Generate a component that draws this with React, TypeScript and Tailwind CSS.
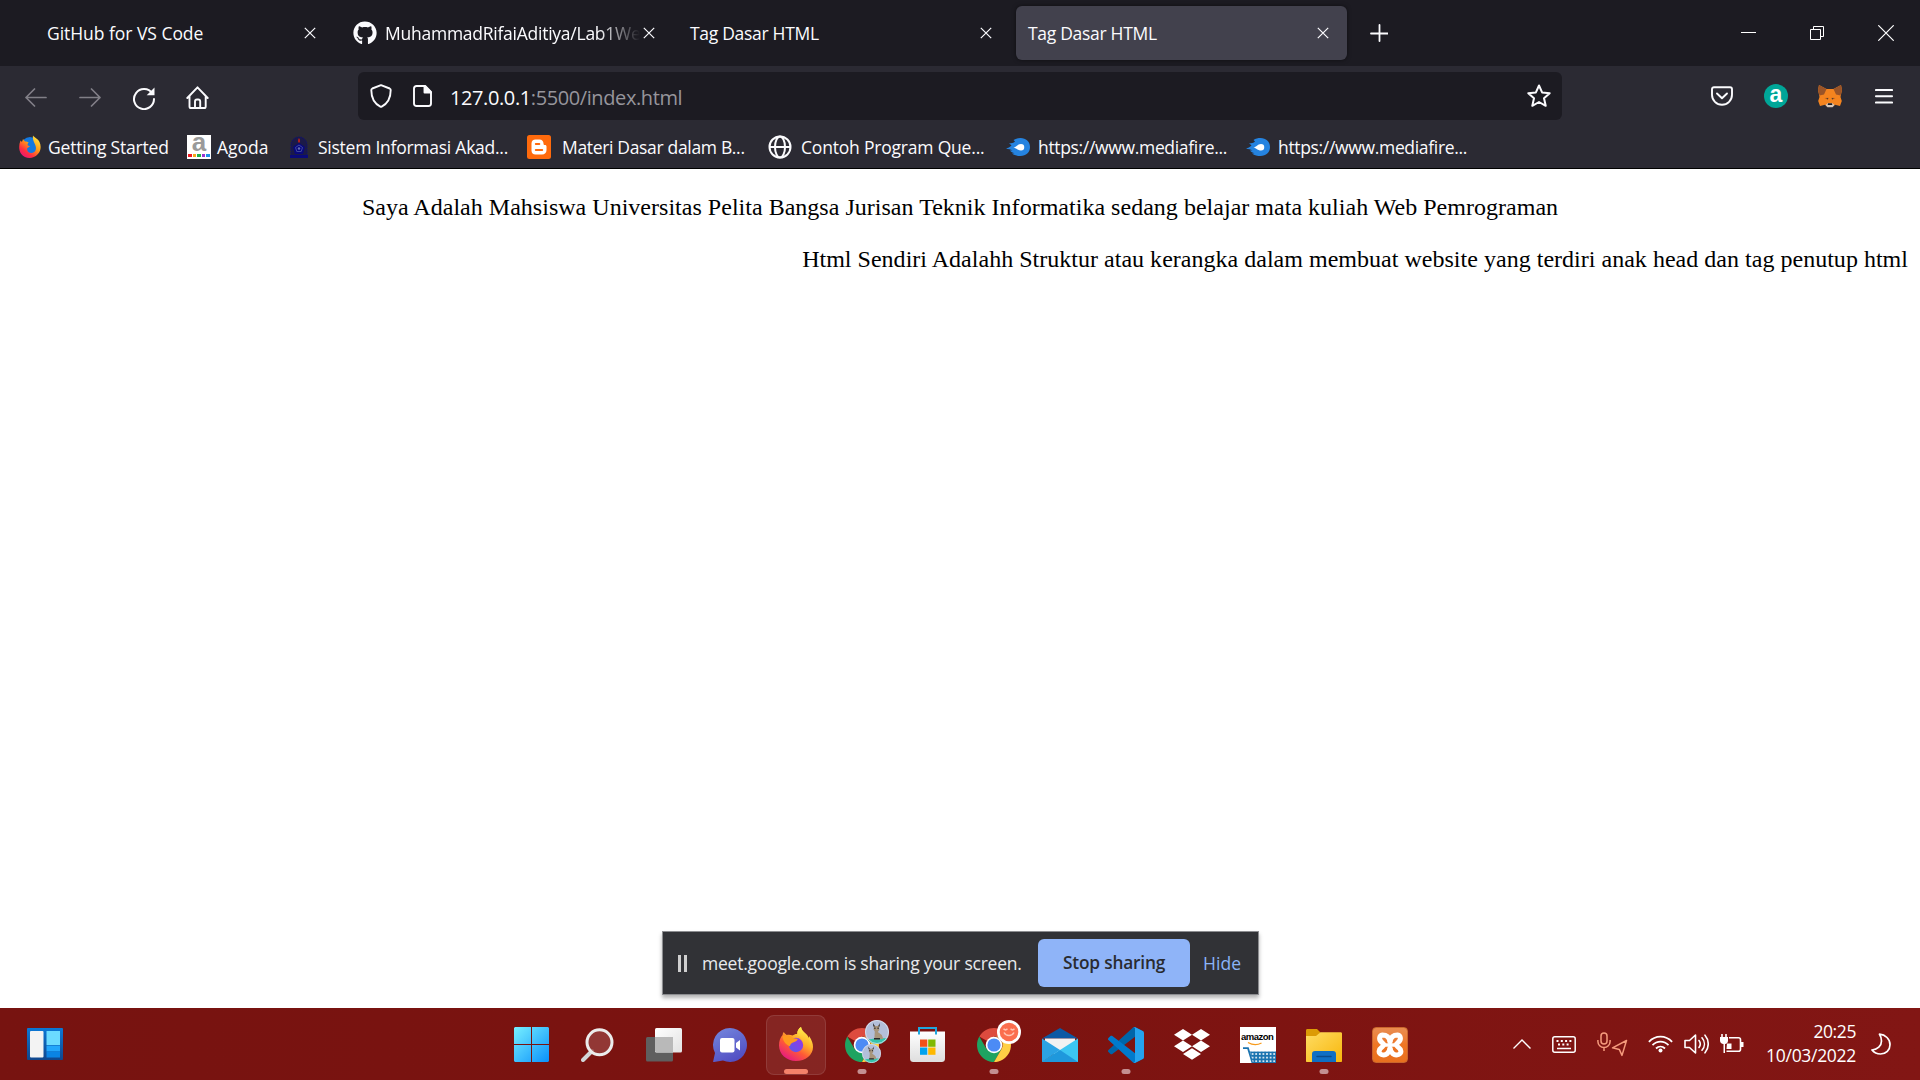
import React from 'react';
import { FaGithub } from 'react-icons/fa';
import { SiXampp } from 'react-icons/si';

const Close = () => (
  <svg className="h-3 w-3 shrink-0" viewBox="0 0 12 12" fill="none" stroke="#fbfbfe" strokeWidth="1.2">
    <path d="M.8.8l10.4 10.4M11.2.8L.8 11.2" />
  </svg>
);

const FirefoxIcon = ({ className }: { className: string }) => (
  <svg className={className} viewBox="0 0 34 34">
    <defs>
      <linearGradient id="ffBody" x1="0.85" y1="0.1" x2="0.25" y2="1">
        <stop offset="0" stopColor="#fff44f" />
        <stop offset=".35" stopColor="#ffb02a" />
        <stop offset=".62" stopColor="#ff5a36" />
        <stop offset="1" stopColor="#e31587" />
      </linearGradient>
      <linearGradient id="ffCore" x1="0" y1="1" x2="1" y2="0">
        <stop offset="0" stopColor="#5a5ae8" />
        <stop offset="1" stopColor="#9a35e8" />
      </linearGradient>
      <linearGradient id="ffTail" x1="0" y1="0" x2="0" y2="1">
        <stop offset="0" stopColor="#fff04a" />
        <stop offset="1" stopColor="#ff9a22" stopOpacity="0" />
      </linearGradient>
    </defs>
    <path d="M22 0c.5 3 2.200 4.500 5 7 1.500 1.400 2.300 2.700 2.700 4.200.3-.7.3-1.500.3-2.200 3 4 4 8 4 11 0 8-7.400 14-17 14S0 27 0 18.500C0 14 1.300 10.500 3.600 8c0-1 .4-2 1.100-2.900.6 1 1.600 2 3 2.900 2-.4 4.300-.2 5.800.5 1.500-1.200 3-1.700 4.700-1.600C18.200 4 19.500 1.500 22 0z" fill="url(#ffBody)" />
    <circle cx="17" cy="18" r="7.200" fill="url(#ffCore)" />
    <path d="M3.500 9c4-1.600 7.500-.8 10 1.400 1.400 1.200 3.800 1.200 5.300 1.300-.3 1.800-2 3-4.800 3.700-2.300.7-2.600 2-3 3.800C7.500 18 4 15 3.500 9z" fill="#ff9a1f" />
    <path d="M22 0c.5 3 2.200 4.500 5 7 3 3 4 7 2 13-1.500 3-4 4-5.500 3.500C26 17 24 12 20 9c-1.300-1-1.800-1.900-1.800-2.100C18.200 4 19.500 1.500 22 0z" fill="url(#ffTail)" />
  </svg>
);

const FirefoxBookmark = () => (
  <svg className="h-6 w-6" viewBox="0 0 24 24">
    <defs>
      <linearGradient id="fbBody" x1=".9" y1="0" x2=".2" y2="1">
        <stop offset="0" stopColor="#fff34a" />
        <stop offset=".45" stopColor="#ff9a16" />
        <stop offset=".75" stopColor="#ff3040" />
        <stop offset="1" stopColor="#e8117a" />
      </linearGradient>
    </defs>
    <circle cx="12" cy="11" r="9" fill="#1479e0" />
    <path d="M15 .5c1 2 5 3 6.500 6.500 2 4 1.400 9-1.800 12.300C15 24.500 7 24 3.300 19 .6 15.400.6 10 2.500 5.500L4 7l1-3 2 2.500c1.500 0 3 .5 3.800 1.300-1.500.7-1.300 2-1 2.800l2.200.7-2.800 1.900c-.7 3 2 5.300 4.800 4.800 3.500-.8 4.500-4 3.700-6.500C17.300 8.200 14.200 6 15 .5z" fill="url(#fbBody)" />
  </svg>
);

const Chrome = () => (
  <svg className="h-[34px] w-[34px]" viewBox="0 0 34 34">
    <path d="M17 17L2.300 8.500A17 17 0 0 1 31.700 8.500L17 8.500z" fill="#dd4b3e" />
    <path d="M2.300 8.500A17 17 0 0 0 17 34l7.400-12.700L17 17 9.700 21.300z" fill="#1ea361" />
    <path d="M31.700 8.500A17 17 0 0 1 17 34l7.400-12.700A8.500 8.500 0 0 0 17 8.500z" fill="#ffcf45" />
    <circle cx="17" cy="17" r="8.300" fill="#fff" />
    <circle cx="17" cy="17" r="6.600" fill="#4c8bf5" />
  </svg>
);

const Avatar = ({ className }: { className: string }) => (
  <svg className={className} viewBox="0 0 24 24">
    <clipPath id="avClip"><circle cx="12" cy="12" r="12" /></clipPath>
    <g clipPath="url(#avClip)">
      <rect width="24" height="24" fill="#b3bfda" />
      <path d="M0 20q8-2 24-2v6H0z" fill="#35c4ac" />
      <path d="M9 5l1.500 1h2L14 5l.3 5-1.500 2 4 3 1.500 4-9 .5.500-8-1.300-2z" fill="#a8957c" />
      <path d="M8 3l2 3.500H8.300zM14.500 3L13.300 6.500h1.500zM9.300 7.500h1.200V9H9.300zM12.500 7.500h1.200V9h-1.200zM9 18h6v1.500H9z" fill="#2c2a2c" />
    </g>
    <circle cx="12" cy="12" r="11.500" fill="none" stroke="#dfe5ef" strokeWidth=".8" />
  </svg>
);

const Pill = () => <span className="absolute bottom-[6px] left-1/2 h-[5px] w-[9px] -translate-x-1/2 rounded-full bg-[#c48f91]" />;

const Slot = ({ children }: { children: React.ReactNode }) => (
  <div className="relative flex h-full w-[66px] items-center justify-center pt-px">{children}</div>
);

const MediaFire = () => (
  <svg className="h-6 w-6" viewBox="0 0 24 24">
    <path d="M0 13.500c2-.5 4-1.500 5.500-3L3 8c3 .5 4.500 0 6-1.500L7.500 5C9.500 3.500 12 3 14.500 3 20 3 24 6.500 24 12s-4 9-9.500 9c-3 0-6-.5-8.500-2.500l2.500-.3C6.500 17.800 5 17 4 15.500l2.500-.2C4.500 14.500 2.500 14 0 13.500z" fill="#2583e0" />
    <path d="M7.500 12.500c3-.3 4-3.500 7.500-3.500a3.200 3.200 0 0 1 0 6.500c-3.500 0-4.500-2.500-7.500-3z" fill="#fff" />
  </svg>
);

function TabStrip() {
  return (
    <header className="flex h-[66px] items-center bg-[#1c1b22] text-[17.5px] text-[#fbfbfe]">
      <div className="flex h-[54px] w-[341px] items-center justify-between pr-[25px] pl-[47px]">
        <span className="tracking-[-0.04px]">GitHub for VS Code</span><Close />
      </div>
      <div className="flex h-[54px] w-[337px] items-center justify-between pr-[23px] pl-[12px]">
        <FaGithub className="h-6 w-6 shrink-0" />
        <span className="mr-auto ml-[8px] tracking-[-0.25px] whitespace-nowrap [mask-image:linear-gradient(to_right,#000_213px,transparent_255px)]">MuhammadRifaiAditiya/Lab1We</span>
        <Close />
      </div>
      <div className="flex h-[54px] w-[338px] items-center justify-between pr-[24px] pl-[12px]">
        <span className="tracking-[-0.3px]">Tag Dasar HTML</span><Close />
      </div>
      <div className="flex h-[54px] w-[331px] items-center justify-between rounded-md bg-[#42414d] pr-[18px] pl-[12px] shadow-[0_0_4px_rgba(0,0,0,0.5)]">
        <span className="tracking-[-0.3px]">Tag Dasar HTML</span><Close />
      </div>
      <svg className="ml-[23px] h-[18px] w-[18px]" viewBox="0 0 18 18" stroke="#fbfbfe" strokeWidth="1.800" strokeLinecap="round"><path d="M9.500.9v16.200M1 9.500h17" /></svg>
      <svg className="ml-auto h-4 w-[15px]" viewBox="0 0 15 16"><path d="M0 7h15v1H0z" fill="#fff" /></svg>
      <svg className="ml-[54px] h-[14px] w-[14px]" viewBox="0 0 14 14" fill="none" stroke="#fff"><path d="M.5 3.500h10v10H.5zM3.500 3.500v-3h10v10h-3" /></svg>
      <svg className="mr-[26px] ml-[54px] h-4 w-4" viewBox="0 0 16 16" stroke="#fff" strokeWidth="1.200"><path d="M.3.3l15.400 15.400M15.700.3L.3 15.700" /></svg>
    </header>
  );
}

function NavBar() {
  return (
    <div className="flex h-[60px] items-center bg-[#2b2a33]">
      <div className="flex w-[358px] items-center pt-[3px] pl-[25px]">
        <svg className="h-6 w-[22px]" viewBox="0 0 22 24" fill="none" stroke="#817f87" strokeWidth="1.700" strokeLinecap="round" strokeLinejoin="round"><path d="M21 11.500H1M9.500 3L1 11.500 9.500 20" /></svg>
        <svg className="ml-[32px] h-6 w-[22px]" viewBox="0 0 22 24" fill="none" stroke="#817f87" strokeWidth="1.700" strokeLinecap="round" strokeLinejoin="round"><path d="M1 11.500h20M12.500 3L21 11.500 12.500 20" /></svg>
        <svg className="ml-[31px] h-6 w-6" viewBox="0 0 24 24" fill="none" stroke="#fbfbfe" strokeWidth="2" strokeLinecap="round"><path d="M20.300 7.500A10 10 0 1 0 22 13" /><path d="M22.500 1.500v7.800h-7.800z" fill="#fbfbfe" stroke="none" /></svg>
        <svg className="ml-[30px] h-6 w-6" viewBox="0 0 24 24" fill="none" stroke="#fbfbfe" strokeWidth="1.900" strokeLinecap="round" strokeLinejoin="round"><path d="M1.300 12L11.500 1.300 21.700 12M3.500 10.200v10.200c0 1 .6 1.600 1.600 1.600h13c1 0 1.600-.6 1.600-1.600V10.200M9 22v-6.500c0-1.200.8-2 2-2h1.200c1.200 0 2 .8 2 2V22" /></svg>
      </div>
      <div className="flex h-12 w-[1204px] items-center rounded-md bg-[#1c1b22] pr-[11px] pl-[12px]">
        <svg className="h-6 w-[22px]" viewBox="0 0 22 24" fill="none" stroke="#fbfbfe" strokeWidth="1.900" strokeLinejoin="round"><path d="M11 1.200l8.700 3.300c.7.300 1 .8 1 1.500 0 8.200-3.200 13.600-9 16.600-.5.200-.9.200-1.400 0C4.500 19.600 1.300 14.200 1.300 6c0-.7.300-1.200 1-1.500z" /></svg>
        <svg className="ml-[21px] h-[22px] w-[19px]" viewBox="0 0 19 22" fill="none" stroke="#fbfbfe" strokeWidth="1.900" strokeLinejoin="round"><path d="M3.500 1h8.700L18 6.800v11.700c0 1.500-1 2.500-2.500 2.500h-12C2 21 1 20 1 18.500v-15C1 2 2 1 3.500 1z" /><path d="M11.500 1v6.500H18z" fill="#fbfbfe" /></svg>
        <span className="ml-[18px] pt-[3px] text-[20px] tracking-[-0.4px] text-[#96959c]"><span className="text-[#fbfbfe]">127.0.0.1</span>:5500/index.html</span>
        <svg className="ml-auto h-6 w-6" viewBox="0 0 24 24" fill="none" stroke="#fbfbfe" strokeWidth="2" strokeLinejoin="round"><path d="M12 1.500l3.100 6.900 7.600.8-5.700 5 1.700 7.600L12 18l-6.700 3.800L7 14.200l-5.700-5 7.600-.8z" /></svg>
      </div>
      <svg className="ml-[149px] h-5 w-[22px]" viewBox="0 0 22 20" fill="none" stroke="#fbfbfe" strokeWidth="1.900" strokeLinecap="round" strokeLinejoin="round"><path d="M3 1.200h16c1.200 0 2 .8 2 2v5.600a10 10 0 0 1-20 0V3.200c0-1.200.8-2 2-2z" /><path d="M6 7.500l5 4.800 5-4.800" /></svg>
      <div className="ml-[31px] flex h-6 w-6 items-center justify-center rounded-full bg-[#00a698] pb-[4px] font-['Liberation_Sans',sans-serif] text-[23px] leading-none font-bold text-white">a</div>
      <svg className="ml-[30px] h-[23px] w-6" viewBox="0 0 24 23">
        <path d="M1 0l7.500 4h7L23 0l1 5-1.500 7 1.300 4-1.800 5-5-1.200L14.500 22h-5L7 19.800 2 21 .2 16l1.300-4L0 5z" fill="#f5841f" />
        <path d="M1 0l7.500 4L6 9.500 1.500 10.500 0 5zM23 0l-7.500 4L18 9.500l4.500 1L24 5z" fill="#9a5428" />
        <path d="M6.500 13l4-.2-.7 2zM17.500 13l-4-.2.700 2z" fill="#b5601f" />
        <path d="M8.300 13l2 .3-.4 1.200zM15.700 13l-2 .3.4 1.200z" fill="#3f3330" />
        <path d="M7.500 20l2.500-2h4l2.500 2-2 2.300h-5z" fill="#d6c8bd" /><path d="M10 18.200h4l.3 1.800H9.700z" fill="#1d1c20" />
      </svg>
      <svg className="ml-[33px] h-[15px] w-[18px]" viewBox="0 0 18 15" stroke="#fbfbfe" strokeWidth="1.900" strokeLinecap="round"><path d="M.9 1h16.200M.9 7.200h16.200M.9 13.500h16.200" /></svg>
    </div>
  );
}

function Bookmarks() {
  return (
    <nav className="flex h-[43px] items-center border-b border-black bg-[#2b2a33] text-[17.5px] whitespace-nowrap text-[#fbfbfe]">
      <div className="flex w-[187px] items-center pl-[18px]"><FirefoxBookmark /><span className="ml-[6px] tracking-[-0.2px]">Getting Started</span></div>
      <div className="flex w-[101px] items-center">
        <div className="flex h-6 w-6 flex-col items-center bg-white">
          <span className="h-[19px] font-['Liberation_Sans',sans-serif] text-[26px] leading-[14px] font-bold text-[#9a9a9a]">a</span>
          <div className="flex gap-px">
            <i className="h-[3px] w-[3.500px] bg-[#f01c24]" /><i className="h-[3px] w-[3.500px] bg-[#f7a51c]" /><i className="h-[3px] w-[3.500px] bg-[#1fb04b]" /><i className="h-[3px] w-[3.500px] bg-[#9a35d0]" /><i className="h-[3px] w-[3.500px] bg-[#1c90e8]" />
          </div>
        </div>
        <span className="ml-[6px]">Agoda</span>
      </div>
      <div className="flex w-[239px] items-center">
        <svg className="h-6 w-[22px]" viewBox="0 0 22 24">
          <path d="M3 21V10C3 5 7 2 11 2s8 3 8 8v11z" fill="#1b1a48" stroke="#101070" strokeDasharray="1.500 1" />
          <path d="M2 20h18v3H2z" fill="#0a0a78" />
          <path d="M11 8l6 4-2 7H7l-2-7z" fill="#09097c" /><path d="M11 10l3.500 2.500-1.300 4H8.800l-1.300-4z" fill="none" stroke="#5059a5" strokeWidth=".8" /><circle cx="11" cy="13.500" r="1.200" fill="#6870b0" />
          <path d="M11 3c1.500 2 1.500 4 0 5-1.500-1-1.500-3 0-5z" fill="#b0201f" />
        </svg>
        <span className="ml-[8px] tracking-[-0.25px]">Sistem Informasi Akad...</span>
      </div>
      <div className="flex w-[241px] items-center">
        <svg className="h-6 w-6" viewBox="0 0 24 24"><rect width="24" height="24" rx="2.500" fill="#ff6a0c" /><path d="M8.500 4.500h4c2.500 0 4 1.800 4 4 0 1 .5 1.500 1.500 1.500s1.500.6 1.500 1.500v3.500c0 2.800-1.800 4.500-4.500 4.500H8.500C6 19.500 4.500 18 4.500 15.500v-7c0-2.400 1.600-4 4-4z" fill="#fff" /><path d="M8.800 9h3.500M8.800 15h6.400" stroke="#ff6a0c" strokeWidth="2" strokeLinecap="round" /></svg>
        <span className="ml-[11px] tracking-[-0.33px]">Materi Dasar dalam B...</span>
      </div>
      <div className="flex w-[238px] items-center">
        <svg className="h-6 w-6" viewBox="0 0 24 24" fill="none" stroke="#fbfbfe" strokeWidth="2"><circle cx="12" cy="12" r="10.500" /><ellipse cx="12" cy="12" rx="5" ry="10.500" /><path d="M1.500 12h21" /></svg>
        <span className="ml-[9px] tracking-[-0.2px]">Contoh Program Que...</span>
      </div>
      <div className="flex w-[240px] items-center"><MediaFire /><span className="ml-[8px] tracking-[-0.33px]">https://www.mediafire...</span></div>
      <div className="flex items-center"><MediaFire /><span className="ml-[8px] tracking-[-0.33px]">https://www.mediafire...</span></div>
    </nav>
  );
}

function Page() {
  return (
    <main className="relative flex-1 bg-white px-3 pt-6 font-['Liberation_Serif',serif] text-[24px] leading-7 tracking-[0.02px] text-black">
      <p className="mb-6 text-center">Saya Adalah Mahsiswa Universitas Pelita Bangsa Jurisan Teknik Informatika sedang belajar mata kuliah Web Pemrograman</p>
      <p className="text-right">Html Sendiri Adalahh Struktur atau kerangka dalam membuat website yang terdiri anak head dan tag penutup html</p>
      <div className="absolute bottom-[13px] left-[662px] flex h-[64px] w-[597px] items-center border border-[#8c8d90] bg-[#313236] pl-[15px] font-['Open_Sans',sans-serif] text-[17.5px] text-[#e8eaed] shadow-[0_3px_4px_rgba(0,0,0,0.3)]">
        <div className="flex gap-[3px]"><i className="h-[17px] w-[3px] bg-[#cfcfcf]" /><i className="h-[17px] w-[3px] bg-[#cfcfcf]" /></div>
        <span className="ml-[15px] tracking-[-0.22px] whitespace-nowrap">meet.google.com is sharing your screen.</span>
        <button className="ml-auto h-12 w-[152px] rounded-md bg-[#8fb4f8] text-[17.3px] font-semibold tracking-[-0.2px] whitespace-nowrap text-[#292b30]">Stop sharing</button>
        <span className="mr-[17px] ml-[13px] text-[#8ab4f8]">Hide</span>
      </div>
    </main>
  );
}

function Taskbar() {
  return (
    <footer className="flex h-[72px] items-center bg-linear-to-r from-[#771310] via-[#7c1310] to-[#821614] text-white">
      <div className="w-[498.500px] pl-[27px]">
        <svg className="h-8 w-9" viewBox="0 0 36 32">
          <defs><linearGradient id="wg" x1="0" y1="0" x2="0" y2="1"><stop offset="0" stopColor="#0a78d6" /><stop offset="1" stopColor="#10468c" /></linearGradient></defs>
          <rect width="36" height="32" rx="1" fill="url(#wg)" /><rect x="3" y="3" width="13.500" height="26.500" rx="1" fill="#f3f3f3" />
          <path d="M19.500 3h13.500v14H19.500z" fill="#6bdbff" /><path d="M19.500 17.500h13.500v6H19.500z" fill="#22a6fb" /><path d="M19.500 23.500h13.500v6H19.500z" fill="#0a84e4" />
        </svg>
      </div>
      <Slot>
        <svg className="h-[35px] w-[35px]" viewBox="0 0 35 35"><defs><linearGradient id="win" gradientUnits="userSpaceOnUse" x1="0" y1="0" x2="35" y2="35"><stop offset="0" stopColor="#77f0ff" /><stop offset="1" stopColor="#0a90fb" /></linearGradient></defs><path d="M1 0h16v17H0V1zM18 0h16l1 1v16H18zM0 18h17v17H1l-1-1zM18 18h17v16l-1 1H18z" fill="url(#win)" /></svg>
      </Slot>
      <Slot>
        <svg className="h-[34px] w-[33px]" viewBox="0 0 33 34" fill="none"><path d="M11 23l-9 9" stroke="#d2d6d8" strokeWidth="4" strokeLinecap="round" /><circle cx="18.500" cy="14.300" r="12.500" fill="#98413f" fillOpacity=".8" stroke="#ececec" strokeWidth="3" /></svg>
      </Slot>
      <Slot>
        <svg className="h-[34px] w-9" viewBox="0 0 36 34"><defs><linearGradient id="tv" x1="0" y1="0" x2="1" y2="1"><stop offset="0" stopColor="#fff" /><stop offset="1" stopColor="#e2e2e2" /></linearGradient></defs><rect y="9" width="27" height="24.500" rx="1.500" fill="#5f5f5f" /><rect x="9" width="27" height="24.500" rx="1.500" fill="url(#tv)" /><path d="M9 9h18v15.500H10.500L9 23z" fill="#b9b9b9" /></svg>
      </Slot>
      <Slot>
        <svg className="h-[34px] w-[34px]" viewBox="0 0 34 34"><defs><linearGradient id="chat" x1="0" y1="0" x2=".5" y2="1"><stop offset="0" stopColor="#7488de" /><stop offset="1" stopColor="#5350c4" /></linearGradient></defs><path d="M17 0a17 17 0 1 1-7 32.500L1 34c-1 0-1-.6-.7-1.300L2 25A17 17 0 0 1 17 0z" fill="url(#chat)" /><rect x="7" y="10" width="14.500" height="14.500" rx="2" fill="#fff" /><path d="M23 15l4-3v10.500l-4-3z" fill="#fff" /></svg>
      </Slot>
      <Slot>
        <div className="absolute top-[7px] left-[3px] h-[60px] w-[60px] rounded-lg border border-white/10 bg-white/8" />
        <FirefoxIcon className="relative -top-px h-[34px] w-[34px]" />
        <span className="absolute bottom-[6px] left-1/2 h-[5px] w-6 -translate-x-1/2 rounded-full bg-[#f4826a]" />
      </Slot>
      <Slot><Chrome /><Avatar className="absolute top-[12px] left-[36px] h-6 w-6" /><Avatar className="absolute top-[36px] left-[33px] h-[19px] w-[19px]" /><Pill /></Slot>
      <Slot>
        <svg className="h-[35px] w-[35px]" viewBox="0 0 35 35"><defs><linearGradient id="store" x1="0" y1="0" x2="0" y2="1"><stop offset="0" stopColor="#fff" /><stop offset="1" stopColor="#dedede" /></linearGradient></defs><path d="M0 4.500h35V31c0 3-1 4-4 4H4c-3 0-4-1-4-4z" fill="url(#store)" /><path d="M9 7.500V1h17v6.500" fill="none" stroke="#1fa6de" strokeWidth="2" /><path d="M10 12.500h7.300v7.300H10z" fill="#f1511b" /><path d="M18.200 12.500h7.300v7.300h-7.300z" fill="#80b900" /><path d="M10 20.500h7.300v7.300H10z" fill="#00a3ee" /><path d="M18.200 20.500h7.300v7.300h-7.300z" fill="#feb800" /></svg>
      </Slot>
      <Slot>
        <Chrome />
        <svg className="absolute top-[12px] left-[36px] h-6 w-6" viewBox="0 0 24 24"><circle cx="12" cy="12" r="12" fill="#fff" /><circle cx="12" cy="12" r="9.300" fill="#fb6e4e" /><path d="M6.500 9l2 1 2-1M13.500 9l2 1 2-1M7 12.500c2 4 8 4 10 0" fill="none" stroke="#ffc4b3" strokeWidth="1.500" /></svg>
        <Pill />
      </Slot>
      <Slot>
        <svg className="h-[34px] w-9" viewBox="0 0 36 34"><path d="M0 10.500L18 0l18 10.500z" fill="#0c59a4" /><path d="M3 10.500h30V20L18 30 3 20z" fill="#f2f2f2" /><path d="M0 10.500L18 22 0 34z" fill="#2ba3e4" /><path d="M36 10.500V34H0l18-12z" fill="#3cc6f2" /><path d="M0 34l18-12 18 12z" fill="#1f98dc" /></svg>
      </Slot>
      <Slot>
        <svg className="h-9 w-9" viewBox="0 0 100 100"><path d="M96.461 10.796L75.857.876C73.472-.273 70.622.212 68.750 2.083L1.299 63.583C-.516 65.237-.514 68.094 1.303 69.745L6.813 74.754C8.298 76.104 10.535 76.204 12.134 74.991L93.361 13.370C96.086 11.303 100 13.246 100 16.667V16.428C100 14.027 98.625 11.838 96.461 10.796Z" fill="#0065a9" /><path d="M96.461 89.204L75.857 99.124C73.472 100.273 70.622 99.788 68.750 97.917L1.299 36.417C-.516 34.763-.514 31.906 1.303 30.255L6.813 25.246C8.298 23.896 10.535 23.796 12.134 25.010L93.361 86.630C96.086 88.697 100 86.754 100 83.333V83.573C100 85.974 98.625 88.162 96.461 89.204Z" fill="#007acc" /><path d="M75.858 99.126C73.472 100.274 70.622 99.788 68.750 97.917C71.056 100.223 75 98.590 75 95.328V4.672C75 1.410 71.056-.223 68.750 2.083C70.622.211 73.472-.274 75.858.874L96.459 10.781C98.623 11.822 100 14.011 100 16.413V83.587C100 85.989 98.623 88.179 96.459 89.220L75.858 99.126Z" fill="#25a3ee" /></svg>
        <Pill />
      </Slot>
      <Slot>
        <svg className="h-[31px] w-9" viewBox="0 0 36 31" fill="#fff"><path d="M9 0l9 5.700-9 5.700-9-5.700zM27 0l9 5.700-9 5.700-9-5.700zM9 11.500l9 5.700-9 5.700-9-5.700zM27 11.500l9 5.700-9 5.700-9-5.700zM18 19.200l9 5.700-9 5.900-9-5.900z" /></svg>
      </Slot>
      <Slot>
        <div className="relative h-9 w-9 overflow-hidden bg-white">
          <span className="absolute top-[4px] left-[1.500px] font-['Liberation_Sans',sans-serif] text-[9.500px] leading-[12px] font-bold tracking-[-0.5px] text-black">amazon</span>
          <svg className="absolute inset-0" viewBox="0 0 36 36"><defs><pattern id="mesh" width="3.600" height="3.600" patternUnits="userSpaceOnUse"><rect width="3.600" height="3.600" fill="#1b74b0" /><circle cx="1.800" cy="1.800" r="1" fill="#fff" /></pattern></defs><path d="M8 15.500q7 4 13.500.5" fill="none" stroke="#f79a1c" strokeWidth="1.300" /><path d="M3 21.200h5L12.500 36" fill="none" stroke="#1b74b0" strokeWidth="1.800" /><path d="M10 24.500h26V36H13z" fill="url(#mesh)" /></svg>
        </div>
      </Slot>
      <Slot>
        <svg className="h-[34px] w-9" viewBox="0 0 36 34"><defs><linearGradient id="fold" x1="0" y1="0" x2="1" y2="1"><stop offset="0" stopColor="#ffdc63" /><stop offset="1" stopColor="#f7b70c" /></linearGradient></defs><path d="M0 10V2.500C0 1.500.6 1 1.500 1H11l3.500 3.500-4 5.500z" fill="#dc9b06" /><path d="M0 8h10l4.500-3.800H34.500c1 0 1.500.5 1.500 1.500V33c0 .6-.4 1-1 1H1c-.6 0-1-.4-1-1z" fill="url(#fold)" /><path d="M6 34V26c0-2 1-3 3-3h18c2 0 3 1 3 3v8z" fill="#0f6fc4" /><path d="M11 28.500h14" stroke="#0b4b8a" strokeWidth="1.500" strokeLinecap="round" /></svg>
        <Pill />
      </Slot>
      <Slot>
        <div className="flex h-9 w-9 items-center justify-center overflow-hidden rounded border border-[#c9662c] bg-linear-to-b from-[#e98d50] via-[#ef7623] to-[#e8701f]">
          <svg className="h-[26px] w-[30px]" viewBox="0 0 30 26" fill="none" stroke="#fff" strokeWidth="5" strokeLinecap="round" strokeLinejoin="round">
            <path d="M15 9.500C14 4 11 3 7.500 3 4 3.500 3.500 8 7 10.500 9 12 9 13.500 7 15c-3.500 2.500-4 6-.5 7.500C11 24 14 21 15 16.500" />
            <path d="M15 9.500C16 4 19 3 22.500 3c3.500.5 4 5 .5 7.500-2 1.500-2 3 0 4.500 3.500 2.500 4 6 .5 7.500C19 24 16 21 15 16.500" />
            <path d="M9.500 13h11" strokeWidth="3.500" />
          </svg>
        </div>
      </Slot>
      <div className="ml-auto flex items-center pr-[29px]">
        <svg className="h-[10px] w-[18px]" viewBox="0 0 18 10" fill="none" stroke="#fff" strokeWidth="1.400"><path d="M.5 9.500L9 1l8.500 8.500" /></svg>
        <svg className="ml-[21px] h-[17px] w-6" viewBox="0 0 24 17" fill="none" stroke="#fff" strokeWidth="1.500"><rect x=".8" y=".8" width="22.400" height="15.400" rx="2" /><path d="M4.500 5h15M6 8.500h13" strokeWidth="2" strokeDasharray="2 2.300" /><path d="M5 12.500h14" /></svg>
        <svg className="-mt-px ml-[21px] h-[26px] w-[31px]" viewBox="0 0 31 26" fill="none" stroke="#f59a7c" strokeWidth="1.500" strokeLinejoin="round"><rect x="4" y="2" width="6" height="11" rx="3" /><path d="M.9 9v1.500a6 6 0 0 0 12.200 0V9M7 16.500V20M29.500 9.500l-14 7.300 6.800 1.600 2.700 6z" /></svg>
        <svg className="-mt-px ml-[20px] h-[18px] w-[25px]" viewBox="0 0 25 18" fill="none" stroke="#fff" strokeWidth="1.800"><path d="M.9 6.800c6.500-7 16.700-7 23.200 0M4.500 10.200c4.500-4.700 11.500-4.700 16 0M8 13.500c2.600-2.600 6.400-2.600 9 0" /><circle cx="12.500" cy="15.500" r="2" fill="#fff" stroke="none" /></svg>
        <svg className="ml-[11px] h-5 w-[25px]" viewBox="0 0 25 20" fill="none" stroke="#fff" strokeWidth="1.600" strokeLinejoin="round" strokeLinecap="round"><path d="M1 6.500h4.500L11.500 1v18l-6-5.500H1zM15 6.500c1.500 2 1.500 5 0 7M18 3.800c3.200 3.700 3.200 8.700 0 12.400M21 1.200c4.300 5 4.300 12.600 0 17.600" /></svg>
        <svg className="-mt-px ml-[11px] h-5 w-6" viewBox="0 0 24 20" fill="none" stroke="#fff" strokeWidth="1.600"><path d="M9 3.800h9.500c1.200 0 2 .7 2 2v9.400c0 1.300-.8 2-2 2H6.500" /><path d="M20.500 8h3v5h-3z" fill="#fff" stroke="none" /><path d="M7 9.500h4.500v5.500H6.500z" fill="#fff" stroke="none" /><path d="M0 3h8v3.500c0 2.200-1.300 3.500-3 3.500v9H3.500v-9C1.500 10 0 8.700 0 6.500z" fill="#fff" stroke="none" /><path d="M2 0v4M6 0v4" /></svg>
        <div className="-mt-px ml-[22px] w-[90px] text-right text-[17.5px] leading-[23.5px] whitespace-nowrap"><p className="tracking-[-0.4px]">20:25</p><p className="tracking-[-0.3px]">10/03/2022</p></div>
        <svg className="ml-[15px] h-[22px] w-5" viewBox="0 0 20 22" fill="none" stroke="#fff" strokeWidth="1.700" strokeLinejoin="round"><path d="M8.500 1.200c6 .5 10.500 4.800 10.500 10.500C19 17 15 21 9.500 21 6 21 3 19.500 1 17c5.500-.5 9.500-4 9.500-9 0-2.500-.7-4.800-2-6.800z" /></svg>
      </div>
    </footer>
  );
}

export default function App() {
  return (
    <div className="flex h-[1080px] w-[1920px] flex-col overflow-hidden font-['Open_Sans',sans-serif]">
      <TabStrip />
      <NavBar />
      <Bookmarks />
      <Page />
      <Taskbar />
    </div>
  );
}
